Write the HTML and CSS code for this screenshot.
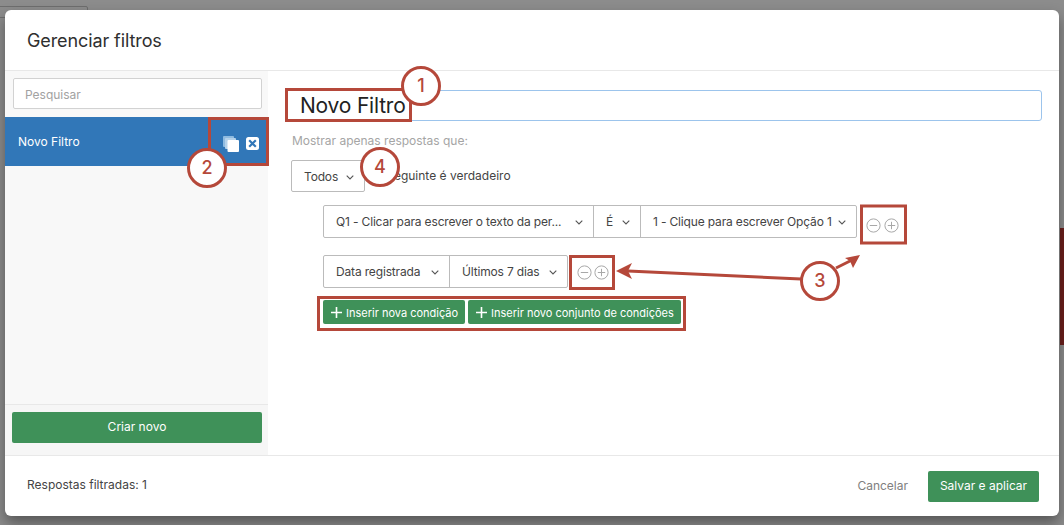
FILE: index.html
```html
<!DOCTYPE html>
<html lang="pt">
<head>
<meta charset="utf-8">
<title>Gerenciar filtros</title>
<link rel="stylesheet" href="styles.css">
</head>
<body>
<div class="stripe"></div>
<div class="bg-tab"></div>
<div class="modal">
  <header class="modal-head"><h1>Gerenciar filtros</h1></header>
  <div class="modal-body">
    <aside class="side">
      <div class="search-wrap"><input class="search" placeholder="Pesquisar"></div>
      <div class="item">
        <span>Novo Filtro</span>
        <span class="item-icons">
          <svg width="16" height="16" viewBox="0 0 16 16"><rect x="0" y="0" width="11" height="11" rx="1" fill="#8fbbe0"/><rect x="2" y="2" width="11" height="11" rx="1" fill="#b5d2ea"/><rect x="4.500" y="4" width="11.500" height="12" rx="1" fill="#fff"/></svg>
          <svg width="13" height="13" viewBox="0 0 13 13"><rect width="13" height="13" rx="2.500" fill="#fff"/><path d="M3.200 3.200l6.600 6.600M9.800 3.200l-6.600 6.600" stroke="#3177b8" stroke-width="2.200"/></svg>
        </span>
      </div>
      <div class="side-fill"></div>
      <div class="side-foot"><button class="btn btn-wide">Criar novo</button></div>
    </aside>
    <main class="main">
      <div class="title-input">Novo Filtro</div>
      <p class="hint">Mostrar apenas respostas que:</p>
      <div class="all-row">
        <div class="seg-group"><div class="seg seg-todos">Todos <svg class="chev" viewBox="0 0 8 5"><path d="M.7.7L4 4l3.300-3.300"/></svg></div></div>
        <span class="all-text">o seguinte é verdadeiro</span>
      </div>
      <div class="cond cond-1">
        <div class="seg-group">
          <div class="seg seg-q">Q1 - Clicar para escrever o texto da per... <svg class="chev" viewBox="0 0 8 5"><path d="M.7.7L4 4l3.300-3.300"/></svg></div>
          <div class="seg seg-e">É <svg class="chev" viewBox="0 0 8 5"><path d="M.7.7L4 4l3.300-3.300"/></svg></div>
          <div class="seg seg-o">1 - Clique para escrever Opção 1 <svg class="chev" viewBox="0 0 8 5"><path d="M.7.7L4 4l3.300-3.300"/></svg></div>
        </div>
        <div class="pm">
          <svg width="15" height="15" viewBox="0 0 15 15"><circle cx="7.500" cy="7.500" r="6.600"/><path d="M3.800 7.500h7.400"/></svg>
          <svg width="15" height="15" viewBox="0 0 15 15"><circle cx="7.500" cy="7.500" r="6.600"/><path d="M3.800 7.500h7.400M7.500 3.800v7.400"/></svg>
        </div>
      </div>
      <div class="cond cond-2">
        <div class="seg-group">
          <div class="seg seg-d">Data registrada <svg class="chev" viewBox="0 0 8 5"><path d="M.7.7L4 4l3.300-3.300"/></svg></div>
          <div class="seg seg-u">Últimos 7 dias <svg class="chev" viewBox="0 0 8 5"><path d="M.7.7L4 4l3.300-3.300"/></svg></div>
        </div>
        <div class="pm pm-2">
          <svg width="15" height="15" viewBox="0 0 15 15"><circle cx="7.500" cy="7.500" r="6.600"/><path d="M3.800 7.500h7.400"/></svg>
          <svg width="15" height="15" viewBox="0 0 15 15"><circle cx="7.500" cy="7.500" r="6.600"/><path d="M3.800 7.500h7.400M7.500 3.800v7.400"/></svg>
        </div>
      </div>
      <div class="adds">
        <button class="btn btn-add btn-add-1"><svg width="11" height="11" viewBox="0 0 11 11"><path d="M5.500 0v11M0 5.500h11"/></svg><span>Inserir nova condição</span></button>
        <button class="btn btn-add btn-add-2"><svg width="11" height="11" viewBox="0 0 11 11"><path d="M5.500 0v11M0 5.500h11"/></svg><span>Inserir novo conjunto de condições</span></button>
      </div>
    </main>
  </div>
  <footer class="modal-foot">
    <span class="count">Respostas filtradas: 1</span>
    <span class="foot-actions"><span class="cancel">Cancelar</span><button class="btn btn-save">Salvar e aplicar</button></span>
  </footer>
</div>

<svg class="marks" width="1064" height="525" viewBox="0 0 1064 525">
  <g fill="none" stroke="#b5483a" stroke-width="3">
    <rect x="286.500" y="89.500" width="124" height="31"/>
    <rect x="209.500" y="118.500" width="58" height="46"/>
    <rect x="861.500" y="206" width="44" height="37"/>
    <rect x="570.500" y="256.500" width="43" height="32"/>
    <rect x="318.500" y="297.500" width="366" height="32"/>
    <path d="M801 279L628 271"/>
    <path d="M836 268L852 260"/>
  </g>
  <path fill="#b5483a" d="M616 271l16-8-4 8 4 8z"/>
  <path fill="#b5483a" d="M860 255l-15 3 5 3 3 7z"/>
</svg>
<span class="num num-1">1</span>
<span class="num num-2">2</span>
<span class="num num-3">3</span>
<span class="num num-4">4</span>
</body>
</html>
```

FILE: styles.css
```css
* { box-sizing: border-box; }
html, body { margin: 0; height: 100%; }
body {
  width: 1064px; height: 525px; overflow: hidden; position: relative;
  background: #8c8c8c;
  font-family: Inter, "Liberation Sans", sans-serif;
  font-size: 12px; color: #333;
  padding: 10px 5px 9px 5px;
}
.stripe { position: absolute; right: 0; top: 228px; width: 4px; height: 117px; background: #6b1f1c; }
.bg-tab { position: absolute; left: -2px; top: 6px; width: 90px; height: 12px; border: 1px solid #6e6e6e; border-radius: 2px; }
.modal {
  position: relative; height: 506px; background: #fff; border-radius: 6px; overflow: hidden;
  display: flex; flex-direction: column;
  box-shadow: 0 7px 14px rgba(0,0,0,.38);
}
.modal-head { height: 61px; border-bottom: 1px solid #e8e8e8; display: flex; align-items: center; padding: 0 22px; flex: none; }
.modal-head h1 { margin: 0; font-size: 18px; font-weight: 400; color: #2f2f2f; letter-spacing: -.1px; }
.modal-body { flex: 1; display: flex; min-height: 0; }
.side { width: 263px; background: #f8f8f8; display: flex; flex-direction: column; flex: none; }
.search-wrap { padding: 7px 6px 8px 8px; }
.search {
  display: block; width: 100%; height: 31px; padding: 1px 11px 0; border: 1px solid #d2d2d2; border-radius: 2px;
  font: 12px Inter, "Liberation Sans", sans-serif; background: #fff; outline: none;
}
.search::placeholder { color: #a2a2a2; opacity: 1; }
.item { height: 49px; background: #3177b8; color: #fff; display: flex; align-items: center; justify-content: space-between; padding: 0 9px 0 13px; }
.item-icons { display: flex; align-items: center; gap: 7px; margin-top: 4px; }
.side-fill { flex: 1; }
.side-foot { border-top: 1px solid #e8e8e8; padding: 7px 6px 12px 7px; background: #f6f6f6; }
.btn { border: 0; border-radius: 2px; background: #3f9159; color: #fff; font: 12px Inter, "Liberation Sans", sans-serif; padding: 0; }
.btn-wide { display: block; width: 100%; height: 31px; padding-bottom: 2px; }
.main { flex: 1; position: relative; padding: 19px 17px 0 17px; min-width: 0; }
.title-input { height: 31px; border: 1.500px solid #9cc4ec; border-radius: 3px; padding: 0 0 0 14px; font-size: 21px; line-height: 30px; color: #222; letter-spacing: -.2px; }
.hint { margin: 12px 0 0 7px; color: #a5a5a5; line-height: 15px; font-size: 12px; }
.all-row { display: flex; align-items: center; margin: 12px 0 0 6px; }
.all-text { margin-left: 12px; color: #444; margin-top: -2px; }
.seg-group { display: flex; background: #fff; border: 1px solid #bbb; border-radius: 2px; height: 100%; }
.all-row .seg-group { width: 74px; height: 32px; }
.seg { display: flex; align-items: center; justify-content: space-between; padding: 0 10px 0 12px; border-left: 1px solid #bbb; color: #444; white-space: nowrap; letter-spacing: -.16px; }
.seg:first-child { border-left: 0; }
.seg-todos { width: 100%; }
.chev { width: 8px; height: 5px; flex: none; margin-top: 2px; }
.chev path { fill: none; stroke: #555; stroke-width: 1.100; }
.cond { display: flex; align-items: center; margin-left: 38px; }
.cond-1 { height: 33px; margin-top: 13px; }
.cond-2 { height: 33px; margin-top: 17px; }
.seg-q { width: 269px; }
.seg-e { width: 47px; }
.seg-o { width: 216px; }
.seg-d { width: 125px; }
.seg-u { width: 118px; }
.pm { display: flex; gap: 3px; margin-left: 9px; margin-top: 7px; }
.pm-2 { margin-left: 9px; margin-top: 1px; gap: 2px; }
.pm svg { fill: none; stroke: #a8a8a8; stroke-width: 1; }
.adds { display: flex; gap: 3px; margin: 12px 0 0 38px; }
.btn-add { height: 24px; display: flex; align-items: center; gap: 4px; padding-left: 8px; font-size: 11px; white-space: nowrap; }
.btn-add span { margin-top: 1px; }
.btn-add svg { stroke: #fff; stroke-width: 1.600; fill: none; flex: none; }
.btn-add-1 { width: 142px; }
.btn-add-2 { width: 213px; }
.modal-foot { height: 61px; border-top: 1px solid #e8e8e8; display: flex; align-items: center; justify-content: space-between; padding: 0 20px 0 22px; flex: none; }
.count { color: #444; margin-top: -4px; }
.foot-actions { display: flex; align-items: center; gap: 20px; }
.cancel { color: #808080; margin-top: -2px; }
.btn-save { width: 111px; height: 31px; padding-bottom: 2px; margin-top: 1px; }
.marks { position: absolute; left: 0; top: 0; pointer-events: none; }
.num {
  position: absolute; width: 40px; height: 40px; border-radius: 50%; border: 3px solid #b5483a; background: #fff; color: #b5483a;
  font-size: 18px; font-weight: 500; line-height: 34px; text-align: center;
}
.num-1 { left: 401px; top: 66px; }
.num-2 { left: 187px; top: 148px; }
.num-3 { left: 800px; top: 261px; }
.num-4 { left: 360px; top: 147px; }
```
